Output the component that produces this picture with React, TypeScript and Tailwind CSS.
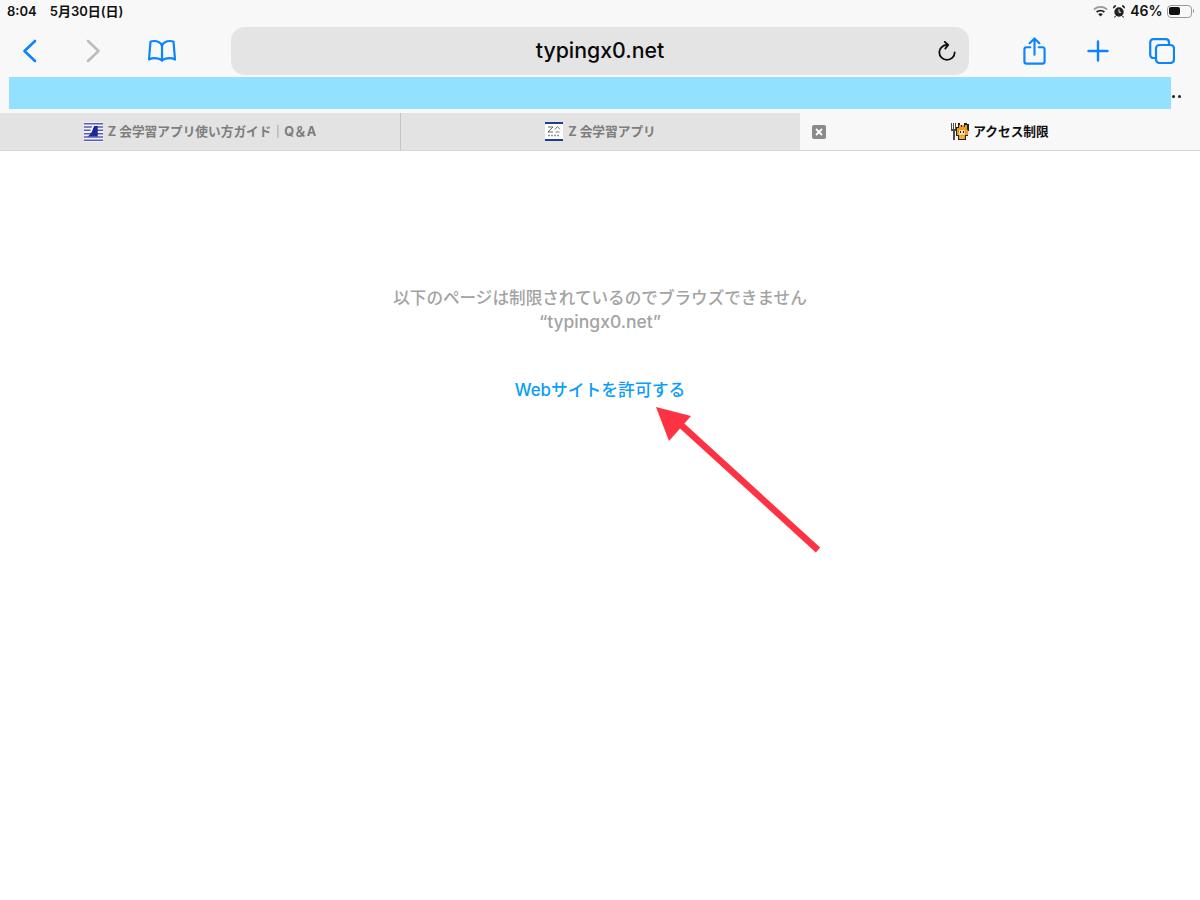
const fontStack = "font-['Inter','Noto_Sans_CJK_JP',sans-serif]";

const tabLabel = "font-['Inter','Noto_Sans_CJK_JP',sans-serif] mt-[1px] text-[12.7px] font-bold leading-none";

const BookIcon = () => (
  <svg width="30" height="24" viewBox="0 0 30 24" fill="none" stroke="#0a84ff" strokeWidth="2.2" strokeLinejoin="round" strokeLinecap="round">
    <path d="M15 6.5C13.5 3.5 10.5 2 7 2C5.5 2 4.3 2.3 3.5 2.7L2 20.5C4 19.5 5.5 19.2 7.5 19.2C10.5 19.2 13.3 20 15 21.5C16.7 20 19.5 19.2 22.5 19.2C24.5 19.2 26 19.5 28 20.5L26.5 2.7C25.7 2.3 24.5 2 23 2C19.5 2 16.5 3.5 15 6.5Z" />
    <path d="M15 6.5V21.5" />
  </svg>
);

const ShareIcon = () => (
  <svg width="23" height="28" viewBox="0 0 24 30" fill="none" stroke="#0a84ff" strokeWidth="2.3" strokeLinecap="round" strokeLinejoin="round" className="mt-[-1px]">
    <path d="M7.5 11H3.5C2.1 11 1.2 11.9 1.2 13.3V26.2C1.2 27.6 2.1 28.5 3.5 28.5H20.5C21.9 28.5 22.8 27.6 22.8 26.2V13.3C22.8 11.9 21.9 11 20.5 11H16.5" />
    <path d="M12 19V2M6.8 6.8L12 1.6L17.2 6.8" />
  </svg>
);

const TabsIcon = () => (
  <svg width="26" height="26" viewBox="0 0 26 26" fill="none" stroke="#0a84ff" strokeWidth="2.2" strokeLinejoin="round">
    <rect x="7" y="7" width="18" height="18" rx="3.5" />
    <path d="M7 20H4.5C2.5 20 1.2 18.7 1.2 16.7V4.5C1.2 2.5 2.5 1.2 4.5 1.2H16.7C18.7 1.2 20 2.5 20 4.5V7" />
  </svg>
);

const ReloadIcon = () => (
  <svg width="18" height="20" viewBox="0 0 18 20" fill="none" stroke="#0d0d0d" strokeWidth="1.8" strokeLinecap="round" strokeLinejoin="round">
    <path d="M8.5 4C4.5 4.3 1.3 7.5 1.3 11.3C1.3 15.5 4.7 18.8 9 18.8C13.3 18.8 16.7 15.5 16.7 11.3" />
    <path d="M6.8 0.9L10.2 4L7.3 7.6" />
  </svg>
);

const WifiIcon = () => (
  <svg width="15" height="11" viewBox="0 0 15 11" fill="#222">
    <path d="M7.5 0C4.7 0 2.2 1.1 0.3 2.9L1.5 4.2C3.1 2.7 5.2 1.8 7.5 1.8C9.8 1.8 11.9 2.7 13.5 4.2L14.7 2.9C12.8 1.1 10.3 0 7.5 0Z" opacity="0.45" />
    <path d="M7.5 3.7C5.8 3.7 4.2 4.4 3 5.5L4.3 6.8C5.1 6 6.3 5.5 7.5 5.5C8.7 5.5 9.9 6 10.7 6.8L12 5.5C10.8 4.4 9.2 3.7 7.5 3.7Z" />
    <path d="M7.5 7.3C6.6 7.3 5.8 7.6 5.2 8.2L7.5 10.6L9.8 8.2C9.2 7.6 8.4 7.3 7.5 7.3Z" />
  </svg>
);

const AlarmIcon = () => (
  <svg width="12" height="13" viewBox="0 0 12 13">
    <circle cx="6" cy="7" r="4.7" fill="#222" />
    <path d="M0.6 3.2L3 0.9L1.8 0.5L0.3 1.9Z M11.4 3.2L9 0.9L10.2 0.5L11.7 1.9Z" fill="#222" stroke="#222" strokeWidth="0.8" />
    <path d="M6 4.3V7.3H8" fill="none" stroke="#f8f8f8" strokeWidth="1" />
    <path d="M2.5 11L1.5 12.5M9.5 11L10.5 12.5" stroke="#222" strokeWidth="1.1" />
  </svg>
);

const Battery = () => (
  <div className="ml-[-1px] flex items-center gap-[1px]">
    <div className="flex h-[13px] w-[25px] items-center rounded-[4px] border border-[#9a9a9a] p-[1.5px]">
      <div className="h-full w-[11px] rounded-[2px] bg-[#111]" />
    </div>
    <div className="h-[4px] w-[1.5px] rounded-r-full bg-[#9a9a9a]" />
  </div>
);

const GuideFavicon = () => (
  <svg width="19" height="20" viewBox="0 0 18 18" className="shrink-0" preserveAspectRatio="none">
    <rect width="18" height="18" fill="#f2f2fa" />
    <path d="M0 1.5H18M0 4.5H18M0 7.5H18M0 10.5H18M0 13.5H18M0 16.5H18" stroke="#5c5cb4" strokeWidth="1.4" />
    <path d="M9 3.5H13V13H3.5C6.5 11 8 8 9 3.5Z" fill="#1a2a9c" />
    <path d="M8 3.5L9.8 3L7 9.5L5.5 9Z" fill="#ffffff" />
  </svg>
);

const AppFavicon = () => (
  <div className="flex h-[19px] w-[18px] shrink-0 flex-col justify-between border-y-2 border-[#1c3f94] bg-white">
    <svg width="18" height="15" viewBox="0 0 18 15">
      <path d="M3 3H8L3 8H8" fill="none" stroke="#555" strokeWidth="0.9" />
      <path d="M10 5.5L12.5 2.5L15 5.5M10.5 8H14.5" fill="none" stroke="#666" strokeWidth="0.9" />
      <path d="M3 11.5H15" stroke="#999" strokeWidth="1.4" strokeDasharray="2 1" />
    </svg>
  </div>
);

const TigerFavicon = () => (
  <svg width="20" height="20" viewBox="0 0 20 20" className="ml-[-1px] shrink-0" shapeRendering="crispEdges">
    <path d="M1 1H2V7H1ZM3 1H4V7H3ZM5 1H6V7H5ZM1 7H6V9H1ZM2.5 9H4.5V18H2.5Z" fill="#4a4a4a" />
    <path d="M8 1H10V3H14V1H17V2H19V9H18V14H16V18H8V14H6V5H8Z" fill="#222" />
    <path d="M9 3H17V8H18V13H15V17H9V13H7V6H9Z" fill="#f09a1e" />
    <path d="M9 8H15V13H9Z" fill="#fbd9ae" />
    <path d="M10 9H11V11H10ZM13 9H14V11H13Z" fill="#222" />
    <path d="M10 14H14V17H10Z" fill="#f6b04a" />
    <path d="M11 3H12V5H11ZM14 3H15V5H14Z" fill="#222" />
  </svg>
);

const Tab = ({ icon, label, className }: { icon: React.ReactNode; label: string; className: string }) => (
  <div className={`flex h-full items-center justify-center gap-[5px] bg-[#e3e3e3] ${className}`}>
    {icon}
    <span className={`${tabLabel} text-[#7d7d7d]`}>{label}</span>
  </div>
);

export default function App() {
  return (
    <div className={`relative flex h-[900px] w-[1200px] flex-col overflow-hidden bg-white ${fontStack}`}>
      <header className="flex h-[151px] flex-col border-b border-[#d4d4d4] bg-[#f8f8f8]">
        {/* status bar */}
        <div className="flex h-[27px] items-start justify-between pl-[7px] pr-[6px] pt-[3px]">
          <div className="flex items-center gap-[13px] text-[13px] font-semibold leading-[16px] text-[#111]">
            <span>8:04</span>
            <span>5月30日(日)</span>
          </div>
          <div className="flex items-center gap-[5px]">
            <WifiIcon />
            <AlarmIcon />
            <span className="text-[14px] font-semibold leading-[16px] text-[#111]">46%</span>
            <Battery />
          </div>
        </div>

        {/* toolbar */}
        <div className="flex h-[48px] items-center">
          <div className="flex w-[231px] items-center">
            <div className="flex w-[58px] justify-center">
              <svg width="15" height="24" viewBox="0 0 15 24" fill="none" stroke="#0a84ff" strokeWidth="2.6" strokeLinecap="round" strokeLinejoin="round">
                <path d="M13 2L2.5 12L13 22" />
              </svg>
            </div>
            <div className="flex w-[70px] justify-center">
              <svg width="15" height="24" viewBox="0 0 15 24" fill="none" stroke="#bdbdbd" strokeWidth="2.6" strokeLinecap="round" strokeLinejoin="round">
                <path d="M2 2L12.5 12L2 22" />
              </svg>
            </div>
            <div className="flex w-[68px] justify-center">
              <BookIcon />
            </div>
          </div>
          <div className="relative flex h-[48px] w-[738px] items-center justify-center rounded-[14px] bg-[#e4e4e4]">
            <span className="text-[21.3px] font-medium leading-none text-[#0a0a0a]">typingx0.net</span>
            <div className="absolute right-[13px] top-[14px]">
              <ReloadIcon />
            </div>
          </div>
          <div className="flex flex-1 items-center pl-[54px]">
            <ShareIcon />
            <svg width="22" height="22" viewBox="0 0 22 22" fill="none" stroke="#0a84ff" strokeWidth="2.4" strokeLinecap="round" className="ml-[41px]">
              <path d="M11 1.5V20.5M1.5 11H20.5" />
            </svg>
            <div className="ml-[40px]">
              <TabsIcon />
            </div>
          </div>
        </div>

        {/* favourites bar */}
        <div className="mt-[2px] flex h-[32px] pl-[8.5px]">
          <div className="h-full w-[1162.5px] bg-[#92e2ff]" />
          <div className="ml-[1px] mt-[18px] flex h-[3px] gap-[3px]">
            <span className="h-[3px] w-[3px] rounded-full bg-[#222]" />
            <span className="h-[3px] w-[3px] rounded-full bg-[#222]" />
          </div>
        </div>

        {/* tabs */}
        <div className="mt-[4px] flex h-[37px]">
          <Tab className="w-[401px] border-r border-[#c4c4c4]" icon={<GuideFavicon />} label="Z 会学習アプリ使い方ガイド｜Q＆A" />
          <Tab className="w-[399px]" icon={<AppFavicon />} label="Z 会学習アプリ" />
          <div className="relative flex h-full w-[400px] items-center justify-center gap-[3px]">
            <div className="absolute left-[12px] top-[12px] flex h-[14px] w-[14px] items-center justify-center rounded-[2px] bg-[#8a8a8a]">
              <svg width="8" height="8" viewBox="0 0 8 8" fill="none" stroke="#ffffff" strokeWidth="1.8">
                <path d="M1 1L7 7M7 1L1 7" />
              </svg>
            </div>
            <TigerFavicon />
            <span className={`${tabLabel} text-[#111]`}>アクセス制限</span>
          </div>
        </div>
      </header>

      {/* blocked page message */}
      <main className="flex flex-1 flex-col items-center pt-[135px]">
        <p className="text-center text-[16.6px] font-medium leading-[24px] text-[#a3a3a3]">
          以下のページは制限されているのでブラウズできません
          <br />
          <span className="text-[17.5px]">“typingx0.net”</span>
        </p>
        <a className="mt-[44px] text-[16.8px] font-medium leading-[24px] text-[#0a9dfa]">Webサイトを許可する</a>
      </main>

      {/* annotation */}
      <svg width="1200" height="900" viewBox="0 0 1200 900" className="pointer-events-none absolute left-0 top-0">
        <path d="M818 550L680 424" stroke="#fd3344" strokeWidth="6.5" fill="none" />
        <path d="M656 407L691 416L669 441Z" fill="#fd3344" />
      </svg>
    </div>
  );
}
